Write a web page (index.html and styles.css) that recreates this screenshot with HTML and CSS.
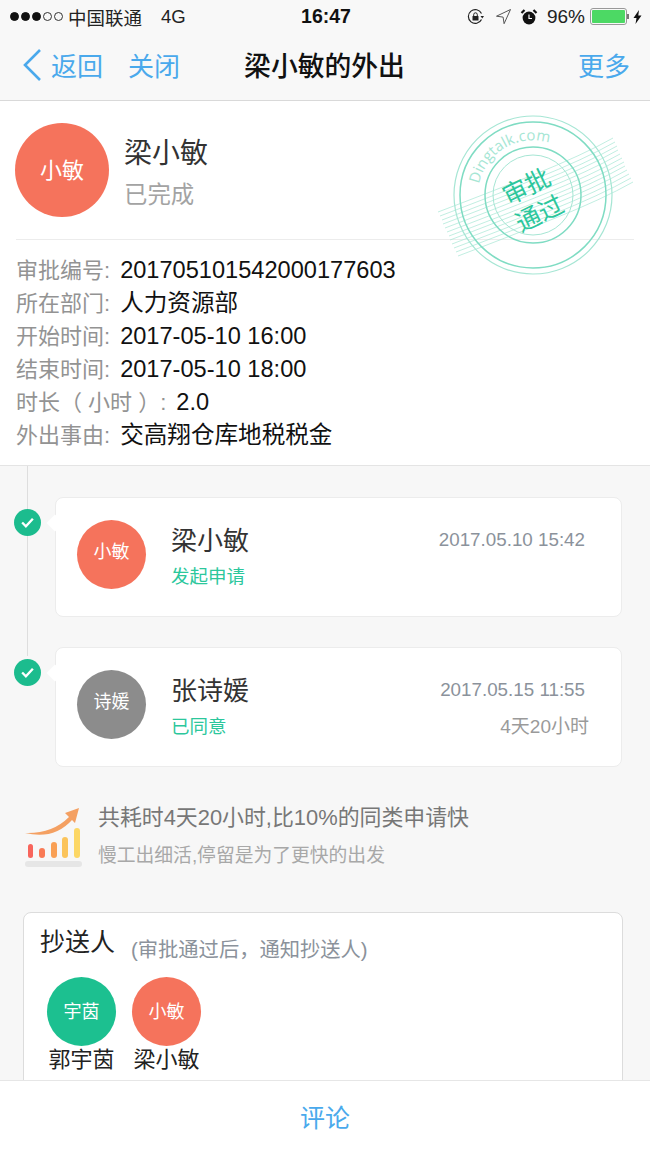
FILE: index.html
```html
<!DOCTYPE html>
<html lang="zh-CN">
<head>
    <meta charset="UTF-8">
    <meta name="viewport" content="width=device-width, initial-scale=1.0">
    <title>梁小敏的外出</title>
    <link rel="stylesheet" href="styles.css">
</head>
<body>
    <div class="screen">
        <header class="top">
            <div class="status">
                <div class="status-left">
                    <span class="signal"><i class="on"></i><i class="on"></i><i class="on"></i><i></i><i></i></span>
                    <span class="carrier">中国联通</span>
                    <span class="net">4G</span>
                </div>
                <div class="clock">16:47</div>
                <div class="status-right">
                    <svg class="ico-lock" width="18" height="18" viewBox="0 0 18 18">
                        <path d="M14.5 11.5A6.9 6.9 0 1 1 14.5 5.500" fill="none" stroke="#222" stroke-width="1.200"/>
                        <path d="M13.500 8h3.500l-1.700 2.400z" fill="#222"/>
                        <rect x="5.500" y="8" width="6" height="4.600" rx=".6" fill="#222"/>
                        <path d="M6.700 8V6.600a1.800 1.800 0 0 1 3.600 0V8" fill="none" stroke="#222" stroke-width="1"/>
                    </svg>
                    <svg class="ico-loc" width="17" height="17" viewBox="0 0 17 17">
                        <path d="M15.500 1.500 1.500 8.200l6.600.9 1 6.600z" fill="none" stroke="#555" stroke-width="1"/>
                    </svg>
                    <svg class="ico-alarm" width="18" height="18" viewBox="0 0 18 18">
                        <circle cx="9" cy="10" r="6.400" fill="#111"/>
                        <path d="M9 6.500V10.500H12" fill="none" stroke="#fff" stroke-width="1.200"/>
                        <path d="M1.500 5 4.500 2M16.500 5 13.500 2" stroke="#111" stroke-width="2.200"/>
                    </svg>
                    <span class="pct">96%</span>
                    <span class="battery"><span class="battery-fill"></span></span>
                    <svg class="ico-bolt" width="9" height="14" viewBox="0 0 9 14">
                        <path d="M6 0 .5 8h3L2.500 14 8.500 5.500h-3.200z" fill="#111"/>
                    </svg>
                </div>
            </div>
            <nav class="nav">
                <div class="nav-left">
                    <svg class="back" width="20" height="34" viewBox="0 0 20 34">
                        <path d="M18 2 3 17l15 15" fill="none" stroke="#4aa9ec" stroke-width="2.600"/>
                    </svg>
                    <span class="nav-link">返回</span>
                    <span class="nav-link close">关闭</span>
                </div>
                <h1 class="nav-title">梁小敏的外出</h1>
                <span class="nav-link more">更多</span>
            </nav>
        </header>

        <section class="summary">
            <div class="person">
                <div class="avatar avatar-big red">小敏</div>
                <div>
                    <div class="person-name">梁小敏</div>
                    <div class="person-state">已完成</div>
                </div>
            </div>
            <div class="divider"></div>
            <dl class="fields">
                <div class="field"><dt>审批编号:</dt><dd>201705101542000177603</dd></div>
                <div class="field"><dt>所在部门:</dt><dd>人力资源部</dd></div>
                <div class="field"><dt>开始时间:</dt><dd>2017-05-10 16:00</dd></div>
                <div class="field"><dt>结束时间:</dt><dd>2017-05-10 18:00</dd></div>
                <div class="field"><dt>时长（ 小时 ）:</dt><dd>2.0</dd></div>
                <div class="field"><dt>外出事由:</dt><dd>交高翔仓库地税税金</dd></div>
            </dl>
            <!-- stamp sits over the card -->
            <svg class="stamp" width="202" height="170" viewBox="0 0 202 170">
                <g fill="none" stroke="#a6e6d4" stroke-width=".7">
                    <path d="M5 97q45-17 95-37t80-37"/>
                    <path d="M7 101q45-17 95-37t80-37"/>
                    <path d="M9 105q45-17 95-37t80-37"/>
                    <path d="M10 109q45-17 95-37t80-37"/>
                    <path d="M12 113q45-17 95-37t80-37"/>
                    <path d="M14 117q45-17 95-37t80-37"/>
                    <path d="M16 121q45-17 95-37t80-37"/>
                    <path d="M17 125q45-17 95-37t80-37"/>
                    <path d="M19 129q45-17 95-37t80-37"/>
                    <path d="M21 133q45-17 95-37t80-37"/>
                    <path d="M23 137q45-17 95-37t80-37"/>
                    <path d="M25 141q45-17 95-37t80-37"/>
                </g>
                <circle cx="100" cy="80" r="79" fill="none" stroke="#a6e6d4" stroke-width="1.200"/>
                <circle cx="100" cy="80" r="73" fill="none" stroke="#7fdcc3" stroke-width="1.500"/>
                <circle cx="100" cy="80" r="48" fill="none" stroke="#7fdcc3" stroke-width="1.500"/>
                <circle cx="100" cy="80" r="40" fill="none" stroke="#a6e6d4" stroke-width="1"/>
                <path id="stamp-arc" d="M46 69A55 55 0 0 1 135 38" fill="none"/>
                <text class="stamp-url"><textPath href="#stamp-arc">Dingtalk.com</textPath></text>
                <g transform="rotate(-26 100 85)">
                    <text class="stamp-word" x="100" y="79">审批</text>
                    <text class="stamp-word" x="100" y="109">通过</text>
                </g>
            </svg>
        </section>

        <main class="flow">
            <div class="timeline">
                <article class="step">
                    <span class="dot"><svg width="15" height="13" viewBox="0 0 14 12"><path d="M2 6l3.500 3.500L12 2.500" fill="none" stroke="#fff" stroke-width="2.200"/></svg></span>
                    <div class="card">
                        <div class="avatar red">小敏</div>
                        <div class="card-body">
                            <div class="card-row">
                                <span class="card-name">梁小敏</span>
                                <span class="card-time">2017.05.10 15:42</span>
                            </div>
                            <div class="card-row">
                                <span class="card-state">发起申请</span>
                            </div>
                        </div>
                    </div>
                </article>
                <article class="step">
                    <span class="dot"><svg width="15" height="13" viewBox="0 0 14 12"><path d="M2 6l3.500 3.500L12 2.500" fill="none" stroke="#fff" stroke-width="2.200"/></svg></span>
                    <div class="card">
                        <div class="avatar grey">诗媛</div>
                        <div class="card-body">
                            <div class="card-row">
                                <span class="card-name">张诗媛</span>
                                <span class="card-time">2017.05.15 11:55</span>
                            </div>
                            <div class="card-row">
                                <span class="card-state">已同意</span>
                                <span class="card-cost">4天20小时</span>
                            </div>
                        </div>
                    </div>
                </article>
            </div>

            <div class="speed">
                <svg class="speed-ico" width="60" height="64" viewBox="0 0 60 64">
                    <path d="M1 29Q28 30 45 13L41 9 55 4 51 19 48 16Q30 36 1 29z" fill="#f4a062"/>
                    <rect x="4" y="40" width="5" height="14" rx="2.500" fill="#f8655c"/>
                    <rect x="15" y="44" width="6" height="10" rx="3" fill="#f97a55"/>
                    <rect x="27" y="38" width="6" height="16" rx="3" fill="#f9a055"/>
                    <rect x="38" y="33" width="6" height="21" rx="3" fill="#fbc45b"/>
                    <rect x="50" y="24" width="6" height="30" rx="3" fill="#fcd765"/>
                    <rect x="1" y="57" width="57" height="6" rx="3" fill="#e6e6e6"/>
                </svg>
                <div>
                    <p class="speed-main">共耗时4天20小时,比10%的同类申请快</p>
                    <p class="speed-sub">慢工出细活,停留是为了更快的出发</p>
                </div>
            </div>

            <section class="cc">
                <div class="cc-head">
                    <span class="cc-title">抄送人</span>
                    <span class="cc-note">(审批通过后，通知抄送人)</span>
                </div>
                <div class="cc-people">
                    <div class="cc-person">
                        <div class="avatar green">宇茵</div>
                        <span>郭宇茵</span>
                    </div>
                    <div class="cc-person">
                        <div class="avatar red">小敏</div>
                        <span>梁小敏</span>
                    </div>
                </div>
            </section>
        </main>

        <footer class="bottom">评论</footer>
    </div>
</body>
</html>
```

FILE: styles.css
```css
* {
    box-sizing: border-box;
}
html, body {
    margin: 0;
    padding: 0;
}
body {
    font-family: "Liberation Sans", "Noto Sans CJK SC", sans-serif;
    background-color: #f7f7f7;
}
.screen {
    position: relative;
    width: 650px;
    height: 1156px;
    overflow: hidden;
    background-color: #f7f7f7;
}

/* top bars */
.top {
    height: 101px;
    background-color: #f8f8f8;
    border-bottom: 1px solid #d9d9d9;
}
.status {
    height: 33px;
    display: grid;
    grid-template-columns: 1fr auto 1fr;
    align-items: center;
    padding: 0 8px 0 10px;
    font-size: 18.500px;
    color: #222;
}
.status-left, .status-right {
    display: flex;
    align-items: center;
}
.status-right {
    justify-content: flex-end;
}
.signal {
    display: flex;
    gap: 2px;
}
.signal i {
    width: 9px;
    height: 9px;
    border-radius: 50%;
    border: 1px solid #333;
}
.signal i.on {
    background-color: #111;
    border-color: #111;
}
.carrier {
    margin-left: 5px;
}
.net {
    margin-left: 19px;
}
.clock {
    font-weight: bold;
    font-size: 19.500px;
    color: #111;
}
.ico-loc {
    margin-left: 10px;
}
.ico-alarm {
    margin-left: 8px;
}
.pct {
    margin-left: 9px;
    font-size: 19px;
}
.battery {
    position: relative;
    width: 37px;
    height: 17px;
    margin-left: 5px;
    padding: 1px;
    border: 1px solid #999;
    border-radius: 3px;
}
.battery::after {
    content: "";
    position: absolute;
    right: -3px;
    top: 5px;
    width: 2px;
    height: 5px;
    background-color: #777;
}
.battery-fill {
    display: block;
    height: 100%;
    background-color: #4cd964;
    border-radius: 1px;
}
.ico-bolt {
    margin-left: 6px;
}
.nav {
    height: 67px;
    display: grid;
    grid-template-columns: 1fr auto 1fr;
    align-items: center;
    padding: 0 20px 4px 22px;
}
.nav-left {
    display: flex;
    align-items: center;
}
.back {
    margin-right: 9px;
}
.nav-link {
    font-size: 26px;
    color: #4aa9ec;
}
.close {
    margin-left: 25px;
}
.more {
    justify-self: end;
}
.nav-title {
    margin: 0 3px 0 0;
    font-size: 26.800px;
    font-weight: 500;
    color: #111;
}

/* summary card */
.summary {
    position: relative;
    height: 365px;
    padding: 22px 16px 0;
    background-color: #fff;
    border-bottom: 1px solid #e4e4e4;
}
.person {
    display: flex;
    align-items: center;
    gap: 15px;
    margin-left: -1px;
}
.avatar {
    flex: none;
    width: 69px;
    height: 69px;
    display: flex;
    align-items: center;
    justify-content: center;
    border-radius: 50%;
    font-size: 18px;
    color: #fff;
}
.avatar-big {
    width: 94px;
    height: 94px;
    padding-bottom: 4px;
    font-size: 22px;
}
.red {
    background-color: #f5735c;
}
.grey {
    background-color: #8c8c8c;
}
.green {
    background-color: #1cc090;
}
.person-name {
    font-size: 28px;
    line-height: 36px;
    color: #333;
    margin-top: 5px;
}
.person-state {
    font-size: 23.400px;
    line-height: 30px;
    margin-top: 8px;
    color: #a3a3a3;
}
.divider {
    height: 1px;
    margin-top: 22px;
    background-color: #ececec;
}
.fields {
    margin: 14px 0 0;
}
.field {
    display: flex;
    gap: 10px;
    align-items: baseline;
    height: 33px;
    line-height: 33px;
}
.field dt {
    font-size: 22px;
    color: #939393;
    white-space: pre;
}
.field dd {
    margin: 0;
    font-size: 23.600px;
    color: #111;
}
.stamp {
    position: absolute;
    left: 433px;
    top: 14px;
}
.stamp-url {
    font-family: "Open Sans", sans-serif;
    font-size: 15px;
    fill: #a6e6d4;
}
.stamp-word {
    font-size: 25px;
    text-anchor: middle;
    fill: #2cc79c;
}

/* approval flow */
.flow {
    padding: 0 28px 0 14px;
}
.timeline {
    position: relative;
    padding-top: 31px;
}
.timeline::before {
    content: "";
    position: absolute;
    left: 13px;
    top: 0;
    height: 190px;
    width: 1px;
    background-color: #dedede;
}
.step {
    position: relative;
    margin-bottom: 30px;
    padding-left: 41px;
}
.dot {
    position: absolute;
    left: 0;
    top: 12px;
    width: 27px;
    height: 27px;
    display: flex;
    align-items: center;
    justify-content: center;
    border-radius: 50%;
    background-color: #1cbc8e;
}
.card {
    position: relative;
    display: flex;
    gap: 25px;
    padding: 22px 32px 0 21px;
    min-height: 120px;
    background-color: #fff;
    border: 1px solid #ececec;
    border-radius: 8px;
}
.card::before {
    content: "";
    position: absolute;
    left: -7px;
    top: 19px;
    width: 12px;
    height: 12px;
    background-color: #fff;
    transform: rotate(45deg);
}
.card .avatar {
    padding-bottom: 10px;
}
.card-body {
    flex: 1;
    padding-top: 3px;
}
.card-row {
    display: flex;
    justify-content: space-between;
    align-items: center;
}
.card-row + .card-row {
    margin-top: 5px;
}
.card-name {
    font-size: 26px;
    line-height: 36px;
    color: #333;
}
.card-time {
    font-size: 18.800px;
    color: #8b929b;
    margin: 0 4px 2px 0;
}
.card-state {
    font-size: 18.500px;
    line-height: 26px;
    color: #2cc79c;
}
.card-cost {
    font-size: 19px;
    line-height: 26px;
    color: #9a9a9a;
}
.speed {
    display: flex;
    gap: 14px;
    margin: 37px 0 0 10px;
}
.speed p {
    margin: 0;
}
.speed-main {
    font-size: 21.900px;
    line-height: 28px;
    color: #777;
}
.speed .speed-sub {
    margin-top: 11px;
    font-size: 18.800px;
    line-height: 26px;
    color: #a8a8a8;
}
.cc {
    margin: 43px -1px 0 9px;
    height: 200px;
    padding: 12px 16px;
    background-color: #fff;
    border: 1px solid #dcdcdc;
    border-radius: 8px;
}
.cc-head {
    display: flex;
    align-items: flex-start;
    gap: 16px;
}
.cc-title {
    font-size: 25px;
    line-height: 34px;
    color: #222;
}
.cc-note {
    margin-top: 8px;
    font-size: 20.300px;
    line-height: 34px;
    color: #8b929b;
}
.cc-people {
    display: flex;
    gap: 16px;
    margin-top: 10px;
    padding-left: 7px;
}
.cc-person {
    display: flex;
    flex-direction: column;
    align-items: center;
    font-size: 22px;
    line-height: 28px;
    color: #222;
}

/* fixed comment bar */
.bottom {
    position: absolute;
    left: 0;
    right: 0;
    bottom: 0;
    height: 76px;
    line-height: 74px;
    text-align: center;
    font-size: 25px;
    color: #4aa9ec;
    background-color: #fff;
    border-top: 1px solid #e6e6e6;
}
```
